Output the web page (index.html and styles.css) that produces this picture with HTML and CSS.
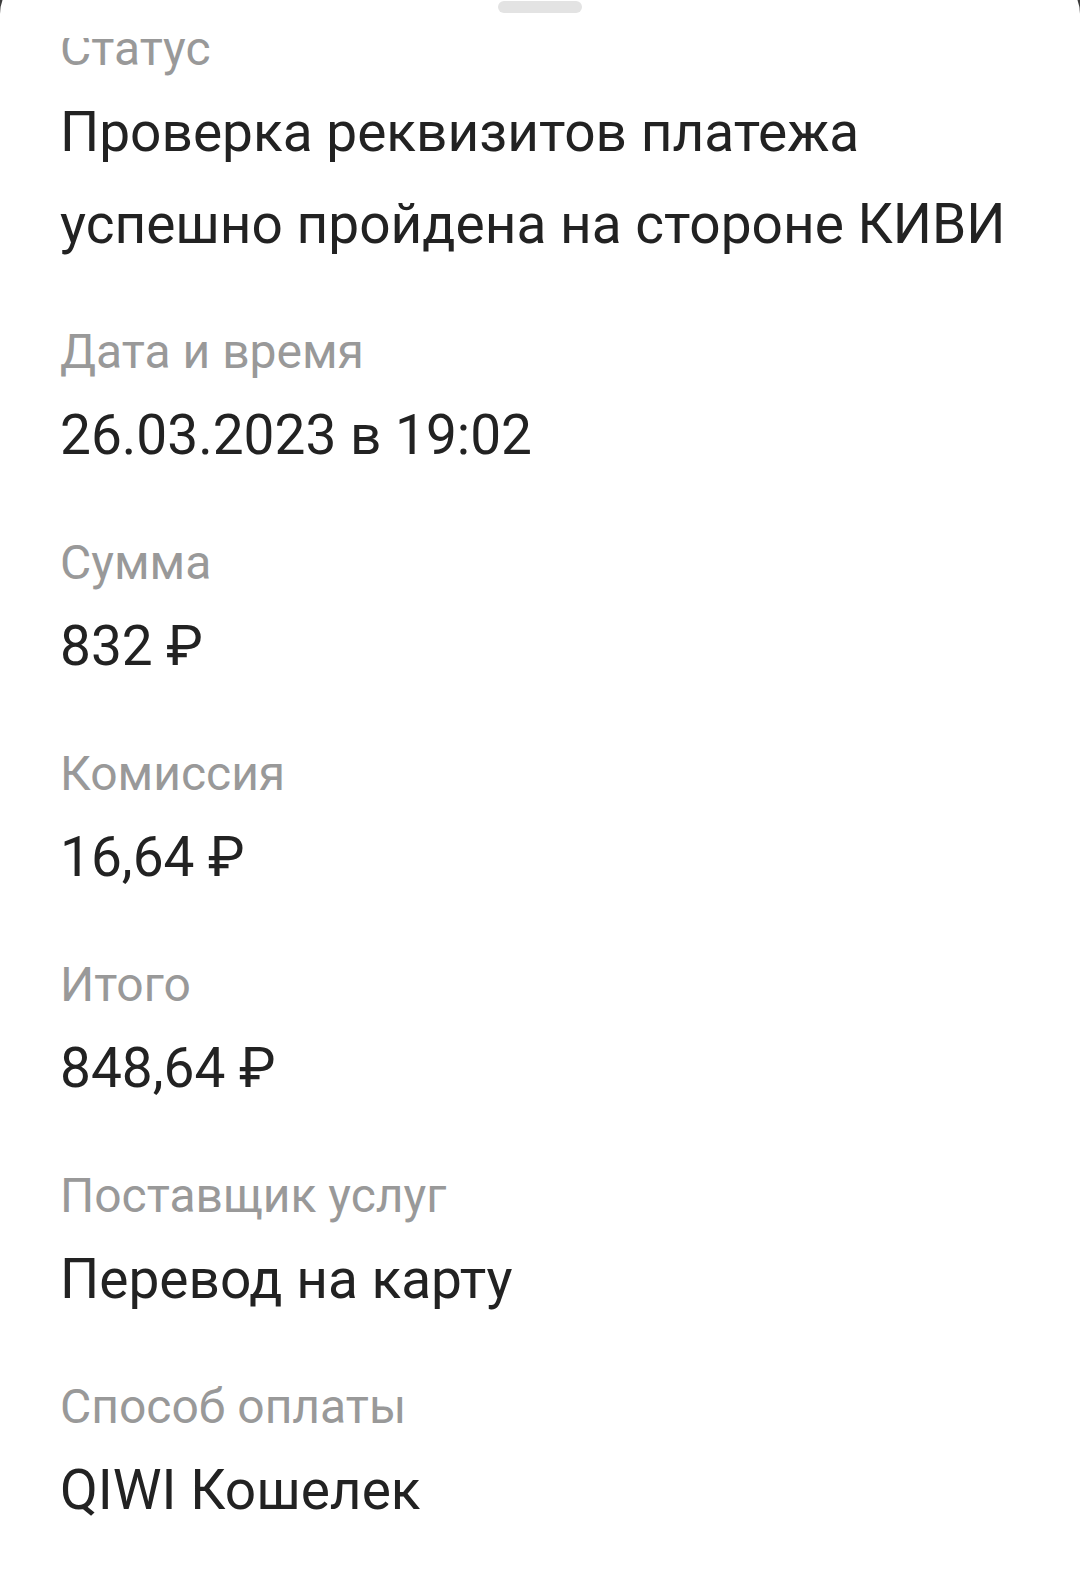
FILE: index.html
```html
<!DOCTYPE html>
<html>
  <head>
    <title>Детали платежа</title>
    <link rel="stylesheet" href="styles.css">
  </head>
  <body>
    <div class="sheet">
      <div class="handle"></div>

      <!-- payment details, scrolled a bit so the first label is cut -->
      <div class="viewport">
        <div class="details">
          <div class="item">
            <div class="label">Статус</div>
            <div class="value">Проверка реквизитов платежа успешно пройдена на стороне КИВИ</div>
          </div>
          <div class="item">
            <div class="label">Дата и время</div>
            <div class="value">26.03.2023 в 19:02</div>
          </div>
          <div class="item">
            <div class="label">Сумма</div>
            <div class="value">832 ₽</div>
          </div>
          <div class="item">
            <div class="label">Комиссия</div>
            <div class="value">16,64 ₽</div>
          </div>
          <div class="item">
            <div class="label">Итого</div>
            <div class="value">848,64 ₽</div>
          </div>
          <div class="item">
            <div class="label">Поставщик услуг</div>
            <div class="value">Перевод на карту</div>
          </div>
          <div class="item">
            <div class="label">Способ оплаты</div>
            <div class="value">QIWI Кошелек</div>
          </div>
        </div>
      </div>
    </div>
  </body>
</html>
```

FILE: styles.css
```css
*{
    margin: 0;
    padding: 0;
    box-sizing: border-box;
}
html, body{
    height: 100%;
}
body{
    background-color: #3c3c3c;
    font-family: Roboto, "Noto Sans", sans-serif;
    overflow: hidden;
}
.sheet{
    background-color: #ffffff;
    border-radius: 40px 40px 0 0;
    margin-top: -26px;
    padding-top: 27px;
    height: calc(100% + 26px);
    display: flex;
    flex-direction: column;
}
.handle{
    width: 84px;
    height: 12px;
    border-radius: 6px;
    background-color: #e3e3e3;
    margin: 0 auto;
}
.viewport{
    margin-top: 25px;
    flex: 1;
    overflow: hidden;
}
.details{
    margin-top: -21px;
    padding: 0 30px 0 60px;
    display: flex;
    flex-direction: column;
    gap: 50px;
}
.item{
    display: flex;
    flex-direction: column;
    gap: 5px;
}
.label{
    color: #999999;
    font-size: 48px;
    line-height: 64px;
}
.value{
    color: #222222;
    font-size: 55px;
    line-height: 92px;
}
```
